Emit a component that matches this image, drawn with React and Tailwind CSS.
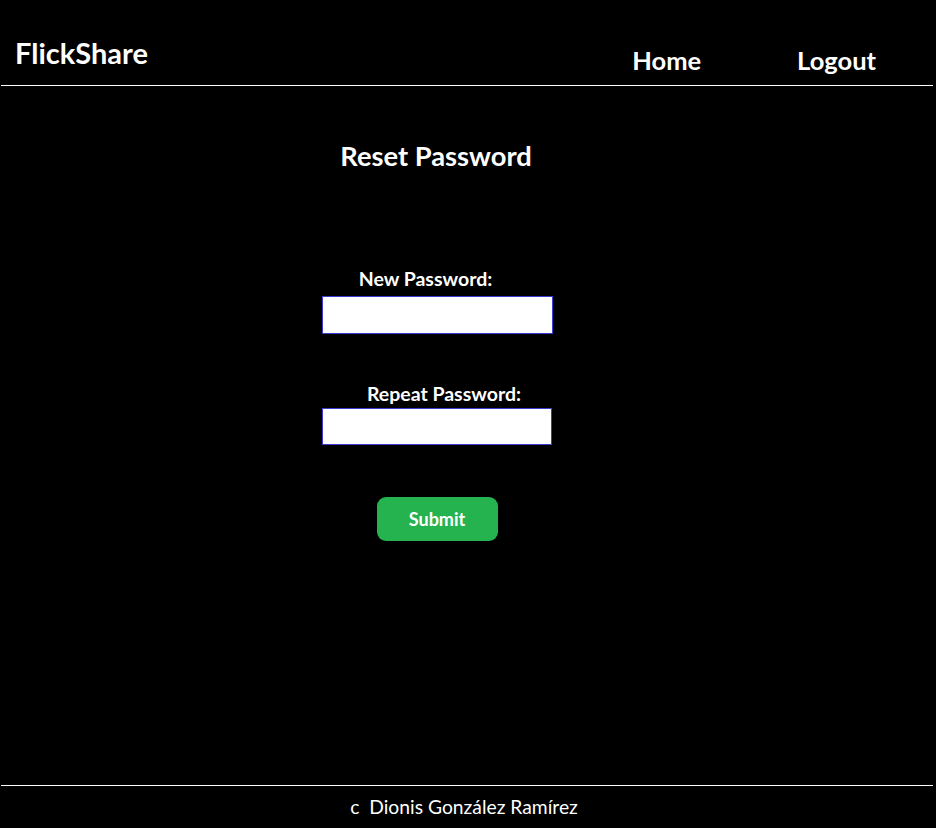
export default function App() {
  return (
    <div className="min-h-[828px] bg-black text-white flex flex-col" style={{ fontFamily: 'Lato, "Open Sans", sans-serif' }}>
      {/* Header */}
      <div className="h-[85px] flex items-start">
        <div className="pl-[15px] pt-[33px] text-[29px] font-bold leading-[40px]">FlickShare</div>
        <div className="ml-auto flex pt-[43px] pr-[60px]">
          <a className="text-[25.5px] font-bold leading-[34px] mr-[96px]">Home</a>
          <a className="text-[25.5px] font-bold leading-[34px]">Logout</a>
        </div>
      </div>
      <div className="h-px bg-white ml-px mr-[3px]" />

      {/* Main */}
      <div className="flex-1 flex flex-col items-center pr-[64px]">
        <h1 className="text-[27.3px] font-bold leading-[36px] mt-[52px]">Reset Password</h1>

        <form className="flex flex-col items-center mt-[92px] ml-[2px]">
          <label className="text-[19.5px] font-bold leading-[26px] mr-[23px]">New Password:</label>
          <input type="password" className="mt-[4px] w-[231px] h-[38px] bg-white border border-[#3b3bd0] outline-none" />

          <label className="text-[19.5px] font-bold leading-[26px] mt-[47px] ml-[14px]">Repeat Password:</label>
          <input type="password" className="mt-[1px] w-[230px] h-[37px] bg-white border border-[#3b3bd0] outline-none mr-px" />

          <button type="button" className="mt-[52px] w-[121px] h-[44px] bg-[#25b350] rounded-[9px] text-[18px] font-bold text-white">Submit</button>
        </form>
      </div>

      {/* Footer */}
      <div className="h-px bg-white ml-px mr-[3px]" />
      <div className="h-[42px] flex items-center justify-center text-[19.3px] leading-[26px] pr-[8px]">
        c&nbsp;&nbsp;Dionis González Ramírez
      </div>
    </div>
  )
}
